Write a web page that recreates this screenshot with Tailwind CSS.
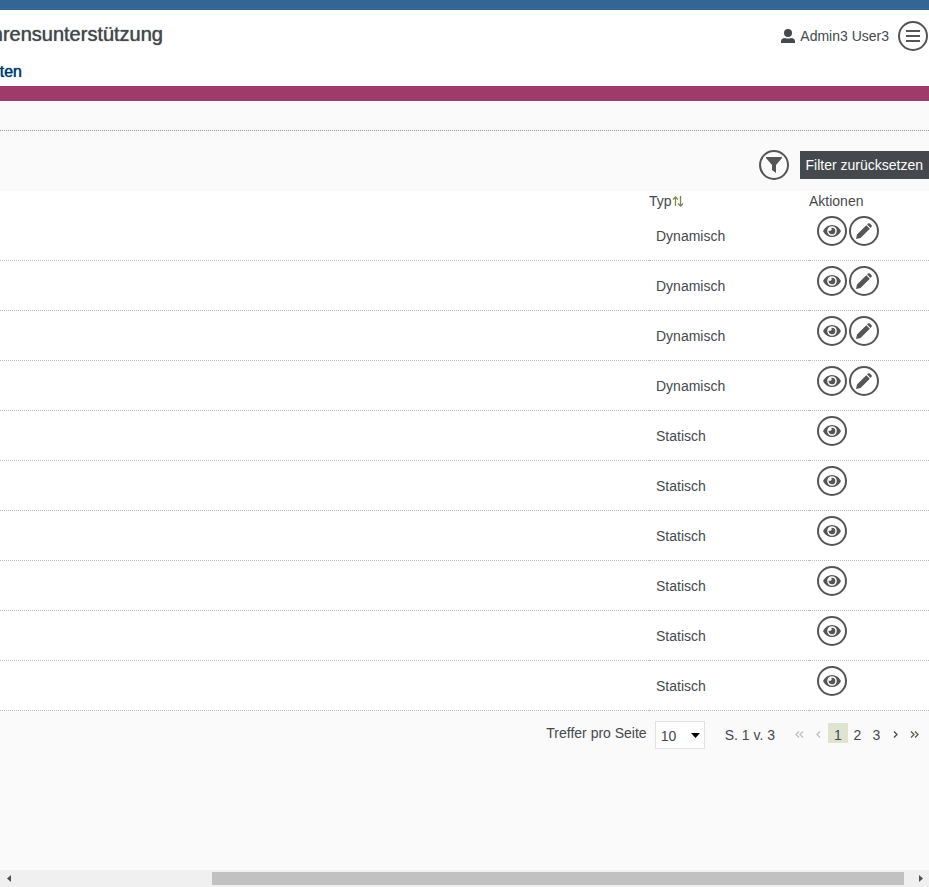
<!DOCTYPE html>
<html lang="de">
<head>
<meta charset="utf-8">
<title>Verfahrensunterstützung</title>
<script src="https://cdn.jsdelivr.net/npm/@tailwindcss/browser@4"></script>
</head>
<body class="flex min-h-screen flex-col overflow-x-hidden bg-[#fafafa] font-['Liberation_Sans',Arial,sans-serif] text-sm text-[#45494d]">
<svg class="hidden" aria-hidden="true">
  <symbol id="eye" viewBox="0 0 18 16"><path fill="currentColor" fill-rule="evenodd" d="M0 8C2 4 5.200 2 9 2s7 2 9 6c-2 4-5.200 6-9 6S2 12 0 8zM9 3.200a4.800 4.800 0 1 0 0 9.600 4.800 4.800 0 0 0 0-9.600z"/><path fill="currentColor" d="M9 4.700a3.300 3.300 0 1 1-3.200 2.600 1.600 1.600 0 0 0 2.400-2.400z"/></symbol>
  <symbol id="pen" viewBox="0 0 16 16"><path fill="currentColor" d="M0 16l1-4.500L10.300 2.200l3.500 3.500L4.500 15zM11.100 1.400l.8-.8q1-.9 2 0l1.500 1.500q.9 1 0 2l-.8.8z"/></symbol>
</svg>

<header>
  <div class="h-[10px] bg-[#326795]"></div>
  <div class="flex h-[52px] justify-between bg-white">
    <div class="flex w-[163px] justify-end overflow-hidden pt-3">
      <h1 class="text-xl leading-6 whitespace-nowrap [text-shadow:0_0_1px_#45494d]">hrensunterstützung</h1>
    </div>
    <div class="flex items-center gap-[9px] pr-px">
      <span class="flex items-center gap-[5px]">
        <svg class="h-[14px] w-[14px]" viewBox="0 0 14 14" aria-hidden="true"><circle cx="7" cy="4" r="4" fill="currentColor"/><path fill="currentColor" d="M0 14v-2c0-2 2-3 4-3q3 1 6 0c2 0 4 1 4 3v2z"/></svg>
        Admin3 User3
      </span>
      <button type="button" aria-label="Menü" class="flex size-[30px] items-center justify-center rounded-full border-2 border-[#555] text-[#555]">
        <svg class="h-[12px] w-[14px]" viewBox="0 0 14 12" aria-hidden="true"><path fill="currentColor" d="M0 0h14v2H0zM0 5h14v2H0zM0 10h14v2H0z"/></svg>
      </button>
    </div>
  </div>
  <nav class="flex h-6 w-full bg-white">
    <div class="flex w-[22px] justify-end overflow-hidden"><a href="#" class="text-base leading-5 text-[#00386e] [text-shadow:0_0_1px_#00386e]">ten</a></div>
  </nav>
  <div class="h-[15px] bg-[#9e3b6a]"></div>
</header>

<main class="grow">
  <div class="h-[30px] border-b border-dotted border-[#999]"></div>
  <div class="flex h-[60px] items-center justify-end gap-[11px] pt-2">
    <button type="button" aria-label="Filter" class="flex size-[30px] items-center justify-center rounded-full border-2 border-[#555] text-[#555]">
      <svg class="size-4" viewBox="0 0 16 16" aria-hidden="true"><path fill="currentColor" d="M0 0h16v1L10 8v8l-4-3V8L0 1z"/></svg>
    </button>
    <button type="button" class="h-7 bg-[#45494d] px-[6px] text-white">Filter zurücksetzen</button>
  </div>

  <table class="w-full table-fixed border-separate border-spacing-0 bg-white text-left">
    <colgroup><col><col class="w-40"><col class="w-[120px]"></colgroup>
    <thead>
      <tr class="h-5">
        <th class="p-0"></th>
        <th class="p-0 font-normal leading-5"><span class="flex items-center">Typ<svg class="h-[11px] w-3" viewBox="0 0 12 11" fill="none" aria-hidden="true"><path stroke="#7c8f3c" stroke-width="1.300" d="M3.500 10V1M1 3.500L3.500 1 6 3.500"/><path stroke="#7d8064" stroke-width="1.300" d="M8.500 0v10M6 7.500L8.500 10 11 7.500"/></svg></span></th>
        <th class="p-0 font-normal leading-5">Aktionen</th>
      </tr>
    </thead>
    <tbody id="rows"></tbody>
  </table>

  <div class="flex items-start justify-end pt-[10px] pr-[5px]">
    <label for="size" class="mr-2 leading-6">Treffer pro Seite</label>
    <div class="relative mr-5">
      <select id="size" class="h-7 w-[50px] appearance-none border border-[#dee2e6] bg-white pt-px pl-[5px] text-[#45494d]"><option>10</option><option>20</option><option>50</option></select>
      <svg class="pointer-events-none absolute top-3 right-[5px] h-[5px] w-[9px]" viewBox="0 0 9 5" aria-hidden="true"><path d="M0 0h9L4.500 5z"/></svg>
    </div>
    <span class="mr-[15px] leading-7">S. 1 v. 3</span>
    <nav aria-label="Seiten" class="flex pt-[2px]">
      <button type="button" disabled aria-label="Erste Seite" class="flex h-[22px] w-[19px] items-center justify-center text-[#c0c0c0]"><svg class="h-[7px] w-[9px]" viewBox="0 0 9 7" fill="none" stroke="currentColor" stroke-width="1.300" aria-hidden="true"><path d="M4 .5l-3 3 3 3M8 .5l-3 3 3 3"/></svg></button>
      <button type="button" disabled aria-label="Vorherige Seite" class="flex h-[22px] w-[19px] items-center justify-center text-[#c0c0c0]"><svg class="h-[7px] w-[5px]" viewBox="0 0 5 7" fill="none" stroke="currentColor" stroke-width="1.300" aria-hidden="true"><path d="M4 .5l-3 3 3 3"/></svg></button>
      <button type="button" aria-current="page" class="h-5 w-5 bg-[#dfe4d0] pt-1 leading-4">1</button>
      <button type="button" class="h-5 w-[19px] pt-1 leading-4">2</button>
      <button type="button" class="h-5 w-[19px] pt-1 leading-4">3</button>
      <button type="button" aria-label="Nächste Seite" class="flex h-[22px] w-[19px] items-center justify-center"><svg class="h-[7px] w-[5px]" viewBox="0 0 5 7" fill="none" stroke="currentColor" stroke-width="1.300" aria-hidden="true"><path d="M1 .5l3 3-3 3"/></svg></button>
      <button type="button" aria-label="Letzte Seite" class="flex h-[22px] w-[19px] items-center justify-center text-[#5d5848]"><svg class="h-[7px] w-[9px]" viewBox="0 0 9 7" fill="none" stroke="currentColor" stroke-width="1.300" aria-hidden="true"><path d="M1 .5l3 3-3 3M5 .5l3 3-3 3"/></svg></button>
    </nav>
  </div>
</main>

<div class="flex h-[17px] items-center justify-between bg-[#f0f0f0] text-[#505050]">
  <button type="button" aria-label="Nach links" class="flex w-[17px] justify-center"><svg class="h-[7px] w-1" viewBox="0 0 4 7" aria-hidden="true"><path fill="currentColor" d="M4 0v7L0 3.500z"/></svg></button>
  <div class="flex grow justify-end pr-2"><div class="h-[13px] w-[78%] bg-[#c1c1c1]"></div></div>
  <button type="button" aria-label="Nach rechts" class="flex w-[17px] justify-center"><svg class="h-[7px] w-1" viewBox="0 0 4 7" aria-hidden="true"><path fill="currentColor" d="M0 0v7l4-3.500z"/></svg></button>
</div>

<script>
const button = (icon, label) => `<button type="button" aria-label="${label}" class="flex size-[30px] items-center justify-center rounded-full border-2 border-[#555] text-[#555]"><svg class="${icon === 'eye' ? 'h-4 w-[18px]' : 'size-4'}" aria-hidden="true"><use href="#${icon}"/></svg></button>`;
const types = [...Array(4).fill('Dynamisch'), ...Array(6).fill('Statisch')];
document.getElementById('rows').innerHTML = types.map(t => `
  <tr class="h-[50px]">
    <td class="border-b border-dotted border-[#bbb] p-0"></td>
    <td class="border-b border-dotted border-[#bbb] p-0 pl-[7px]">${t}</td>
    <td class="border-b border-dotted border-[#bbb] p-0 pt-[5px] pl-2 align-top"><div class="flex gap-[2px]">${button('eye', 'Anzeigen')}${t === 'Dynamisch' ? button('pen', 'Bearbeiten') : ''}</div></td>
  </tr>`).join('');
</script>
</body>
</html>
